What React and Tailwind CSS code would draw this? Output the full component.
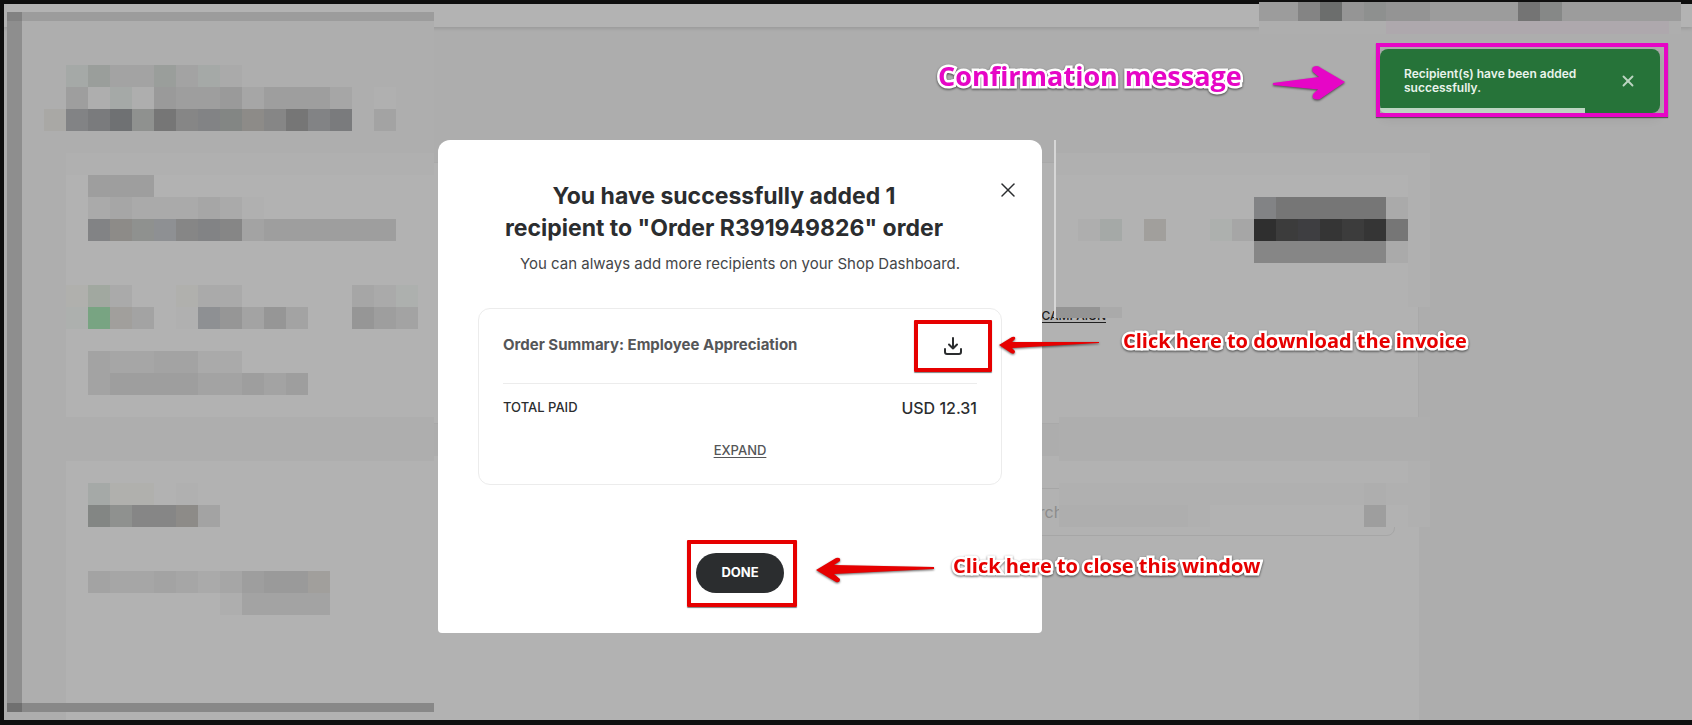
import React from 'react';
import { X } from 'lucide-react';

// Shades used by the pixelated areas
const shades = {
  a: 'bg-[#aaaaaa]',
  b: 'bg-[#a6a6a6]',
  c: 'bg-[#a3a3a3]',
  d: 'bg-[#9e9e9e]',
  e: 'bg-[#9a9a9a]',
  f: 'bg-[#969696]',
  g: 'bg-[#868686]',
  h: 'bg-[#828385]',
  i: 'bg-[#7a7b7d]',
  j: 'bg-[#6f7173]',
  k: 'bg-[#767676]',
  l: 'bg-[#9a9e9b]',
  m: 'bg-[#a5a9a7]',
  n: 'bg-[#8f918f]',
  o: 'bg-[#a9a8a5]',
  p: 'bg-[#8d8b88]',
  q: 'bg-[#8e9093]',
  r: 'bg-[#b0b0ad]',
  s: 'bg-[#a1a8a0]',
  t: 'bg-[#78a482]',
  u: 'bg-[#a19f9c]',
  v: 'bg-[#838684]',
  w: 'bg-[#aeaeae]',
  x: 'bg-[#b0b0b0]',
  y: 'bg-[#b2b2b2]',
  z: 'bg-[#adb0ae]',
  D: 'bg-[#2f2f2f]',
  E: 'bg-[#3c3c3c]',
  F: 'bg-[#3e3e41]',
  G: 'bg-[#353535]',
};

const leftRows = [
  'wwwwwwwwwwwwwwwwwwww',
  'wwwwwwwwwwwwwwwwwwww',
  'wwmlcclcmawwwwwwwwww',
  'wwdwmweddebdddbwxwww',
  'wohijnkghvpgkhiwcwww',
  'wwwwwwwwwwwwwwwwwwww',
  'wwxxxxxxxxxxxxxxxxxx',
  'wwydddyyyyyyyyyyyyyy',
  'wwyabaaabaxyyyyyyyyy',
  'wwyhpnqghgcddddddyyy',
  'wwyyyyyyyyyyyyyyyyyy',
  'wwyyyyyyyyyyyyyyyyyy',
  'wwrsayyraayyyyybazyy',
  'wwztucyxqfcfcyyfdcyy',
  'wwyyyyyyyyyyyyyyyyyy',
  'wwycbbccaayyyyyyyyyy',
  'wwycddddccdcdyyyyyyy',
  'wwyyyyyyyyyyyyyyyyyy',
  'wwwwwwwwwwwwwwwwwwww',
  'wwwwwwwwwwwwwwwwwwww',
  'wwyyyyyyyyyyyyyyyyyy',
  'wwymrryxyyyyyyyyyyyy',
  'wwyvnggpcyyyyyyyyyyy',
  'wwyyyyyyyyyyyyyyyyyy',
  'wwyyyyyyyyyyyyyyyyyy',
  'wwycbbcbabdeeuyyyyyy',
  'wwyyyyyyywccccyyyyyy',
  'wwyyyyyyyyyyyyyyyyyy',
  'wwyyyyyyyyyyyyyyyyyy',
  'wwyyyyyyyyyyyyyyyyyy',
  'wwyyyyyyyyyyyyyyyyyy',
];

const rightRows = [
  'xxxxxxxxxxxxxxxxx',
  'yyyyyyyyyyyyyyyyx',
  'yyyyyyyyyhkkkkkax',
  'ywmyuyyzbDEFGEGkx',
  'yyyyyyyyygggggg' + 'ax',
  'yyyyyyyyyyyyyyyyx',
  'yyyyyyyyyyyyyyyyx',
];

const searchRows = [
  'wwwwwwwwwwwwwwwww',
  'wwwwwwwwwwwwwwwww',
  'yyyyyyyyyyyyyyyyx',
  'xxxxxxxxxxxxxxwxx',
  'wwwwwwxyyyyyyydyx',
];

const Mosaic = ({ rows, className }) => (
  <div aria-hidden="true" className={className}>
    {rows.map((row, y) => (
      <div key={y} className="flex">
        {row.split('').map((cell, x) => (
          <div key={x} className={`h-[22px] w-[22px] shrink-0 ${shades[cell]}`}></div>
        ))}
      </div>
    ))}
  </div>
);

const Note = ({ className, children }) => (
  <p className={`absolute whitespace-nowrap font-['Open_Sans','Noto_Sans',sans-serif] font-bold [paint-order:stroke_fill] [-webkit-text-stroke:5px_white] drop-shadow-[0_1px_1px_rgba(0,0,0,0.6)] ${className}`}>
    {children}
  </p>
);

const DownloadIcon = () => (
  <svg width="24" height="24" viewBox="0 0 24 24" fill="none" stroke="currentColor" strokeWidth="2" strokeLinecap="round" strokeLinejoin="round">
    <path d="M12 4v10.5M8 10.500l4 4 4-4M4 15v3a2 2 0 0 0 2 2h12a2 2 0 0 0 2-2v-3" />
  </svg>
);

const Page = () => (
  <div className="flex min-h-screen flex-col border-t-4 border-b-[5px] border-l-4 border-[#0f0f0f] bg-[#adadad]">
    <header className="h-[23px] bg-[#b3b3b3] shadow-[0_1px_4px_rgba(0,0,0,0.15)]"></header>
    <main className="flex grow flex-col gap-8 pt-[135px] pr-[273px] pl-[62px]">
      <section className="flex h-[262px] items-center justify-end border border-[#a9a9a9] bg-[#b2b2b2] pt-[86px] pr-[312px] pb-10">
        <a href="#campaign" className="text-xs font-medium leading-4 text-[#1f1f1f] underline underline-offset-2">CAMPAIGN</a>
      </section>
      <section className="flex grow items-start justify-end bg-[#b2b2b2] px-6 pt-8">
        <input
          aria-label="Search"
          placeholder="Search"
          className="h-12 w-[600px] rounded-lg border border-[#a6a6a6] bg-transparent pl-[214px] placeholder:text-[#8c8c8c]"
        />
      </section>
    </main>
  </div>
);

const Redactions = () => (
  <>
    <div aria-hidden="true" className="absolute top-3 left-[7px] w-[427px] overflow-hidden">
      <div className="flex h-[9px]">
        <div className="w-[15px] bg-[#828282]"></div>
        <div className="grow bg-[#9c9c9c]"></div>
      </div>
      <div className="flex">
        <div className="w-[15px] shrink-0 bg-[#8e8e8e]"></div>
        <Mosaic rows={leftRows} />
      </div>
      <div className="flex h-[9px]">
        <div className="w-[15px] bg-[#707070]"></div>
        <div className="grow bg-[#888888]"></div>
      </div>
    </div>

    <div aria-hidden="true" className="absolute top-[140px] left-[1054px] h-[178px] overflow-hidden border-l-2 border-[#d6d6d6] pt-[13px]">
      <Mosaic rows={rightRows} />
      <div className="flex h-[11px]">
        <div className="w-[44px] bg-[#949494]"></div>
        <div className="w-[22px] bg-[#aaaaaa]"></div>
      </div>
    </div>

    <div className="absolute top-[417px] left-[1059px] w-[371px] overflow-hidden">
      <Mosaic rows={searchRows} className="-ml-[3px]" />
    </div>

    <div aria-hidden="true" className="absolute top-[2px] right-[11px] w-[422px]">
      <div className="flex h-[19px] bg-[#9c9c9c] pl-[39px]">
        <div className="w-[22px] bg-[#848484]"></div>
        <div className="w-[22px] bg-[#6c6e6d]"></div>
        <div className="w-[22px] bg-[#959595]"></div>
        <div className="w-[22px] bg-[#8e908f]"></div>
        <div className="w-[44px] bg-[#949494]"></div>
        <div className="ml-[88px] w-[22px] bg-[#747474]"></div>
        <div className="w-[22px] bg-[#868887]"></div>
      </div>
      <div className="h-[13px] bg-[#aeaeae] pr-3 pl-[127px]">
        <div className="h-full bg-[#aea8ad]"></div>
      </div>
    </div>
  </>
);

const Toast = () => (
  <div role="status" className="absolute top-[49px] right-8 w-[280px] rounded-lg bg-[#267339] shadow-[0_4px_12px_rgba(0,0,0,0.1)]">
    <div className="flex h-16 items-center justify-between pr-[23px] pl-6">
      <p className="w-[180px] text-xs font-semibold leading-[14px] text-[#eaf3ec]">Recipient(s) have been added successfully.</p>
      <button aria-label="Dismiss" className="text-[#bcd5c2]">
        <X size={18} strokeWidth={2.5} />
      </button>
    </div>
    <div className="absolute bottom-0 left-0 h-[5px] w-[205px] rounded-bl-lg bg-[#bcd5c2]"></div>
    <div className="absolute -top-[6px] -right-2 -bottom-1 -left-1 border-4 border-[#e606c6] shadow-[0_1px_1px_rgba(0,0,0,0.5)]"></div>
  </div>
);

const Modal = () => (
  <div role="dialog" aria-labelledby="modal-title" className="relative w-[604px] rounded-t-xl rounded-b bg-white px-10 pt-10 pb-10 text-[#2b2d2f]">
    <button aria-label="Close" className="absolute top-[38px] right-[22px]">
      <X size={24} strokeWidth={1.5} />
    </button>
    <h1 id="modal-title" className="pr-8 text-center text-[23px] font-bold leading-8">
      You have successfully added 1<br />
      recipient to "Order R391949826" order
    </h1>
    <p className="mt-2 text-center text-[15px] leading-6 text-[#444648]">You can always add more recipients on your Shop Dashboard.</p>

    <div className="mt-8 rounded-xl border border-[#ececec] px-6">
      <div className="flex h-[75px] items-center justify-between border-b border-[#ececec] pr-3 pb-px">
        <h2 className="text-[15px] font-bold text-[#555658]">Order Summary: Employee Appreciation</h2>
        <button aria-label="Download invoice" className="relative">
          <DownloadIcon />
          <span className="absolute -inset-x-[27px] -inset-y-[14px] rounded-[1px] border-4 border-[#e60000] shadow-[0_1px_1px_rgba(0,0,0,0.5)]"></span>
        </button>
      </div>
      <div className="flex h-12 items-center justify-between">
        <span className="text-[13px] font-medium">TOTAL PAID</span>
        <span className="text-base font-medium">USD 12.31</span>
      </div>
      <div className="flex justify-center pt-2 pb-6">
        <button className="text-[13px] leading-5 font-medium text-[#555658] underline underline-offset-2">EXPAND</button>
      </div>
    </div>

    <div className="mt-[68px] flex justify-center">
      <button className="relative h-10 w-[88px] rounded-full bg-[#2b2d2f] text-[13px] font-bold text-white">
        DONE
        <span className="absolute -top-[13px] -right-[13px] -bottom-[14px] -left-[9px] rounded-[1px] border-4 border-[#e60000] shadow-[0_1px_1px_rgba(0,0,0,0.5)]"></span>
      </button>
    </div>
  </div>
);

const Annotations = () => (
  <div className="pointer-events-none absolute inset-0">
    <Note className="top-[56px] left-[938px] text-[27px] leading-10 text-[#e606c6]">Confirmation message</Note>
    <svg className="absolute top-[64px] left-[1270px] drop-shadow-[0_1px_1px_rgba(0,0,0,0.6)]" width="80" height="40" viewBox="0 0 80 40">
      <path d="M3 19 L49 13 L43 8 Q41 4 44 2.500 Q48 1 51 4 L75 18 L50 35 Q46 36.500 43 34 Q42 31 44 29 L48 25.500 L3 21 Z" fill="#e606c6" />
    </svg>

    <Note className="top-[327px] left-[1123px] text-[20px] leading-7 text-[#e60000]">Click here to download the invoice</Note>
    <svg className="absolute top-[330px] left-[996px] drop-shadow-[0_1px_1px_rgba(0,0,0,0.6)]" width="106" height="32" viewBox="0 0 106 32">
      <path d="M3 15 L16 7 Q20 6 19 9 L16 12 L103 12 V13 L16 18 L19 21 Q19 25 15 23 Z" fill="#e60000" />
    </svg>

    <Note className="top-[552px] left-[953px] text-[20px] leading-7 text-[#e60000]">Click here to close this window</Note>
    <svg className="absolute top-[552px] left-[812px] drop-shadow-[0_1px_1px_rgba(0,0,0,0.6)]" width="126" height="34" viewBox="0 0 126 34">
      <path d="M4 18 L24 6 Q29 5 28 9 L22 13 L122 15 V17 L22 22 L28 27 Q28 31 24 30 Z" fill="#e60000" />
    </svg>
  </div>
);

export default function App() {
  return (
    <div className="relative min-h-screen overflow-hidden font-['Inter','Liberation_Sans',sans-serif]">
      <Page />
      <Redactions />
      <div className="absolute inset-0 pt-[140px] pl-[438px]">
        <Modal />
      </div>
      <Toast />
      <Annotations />
    </div>
  );
}
